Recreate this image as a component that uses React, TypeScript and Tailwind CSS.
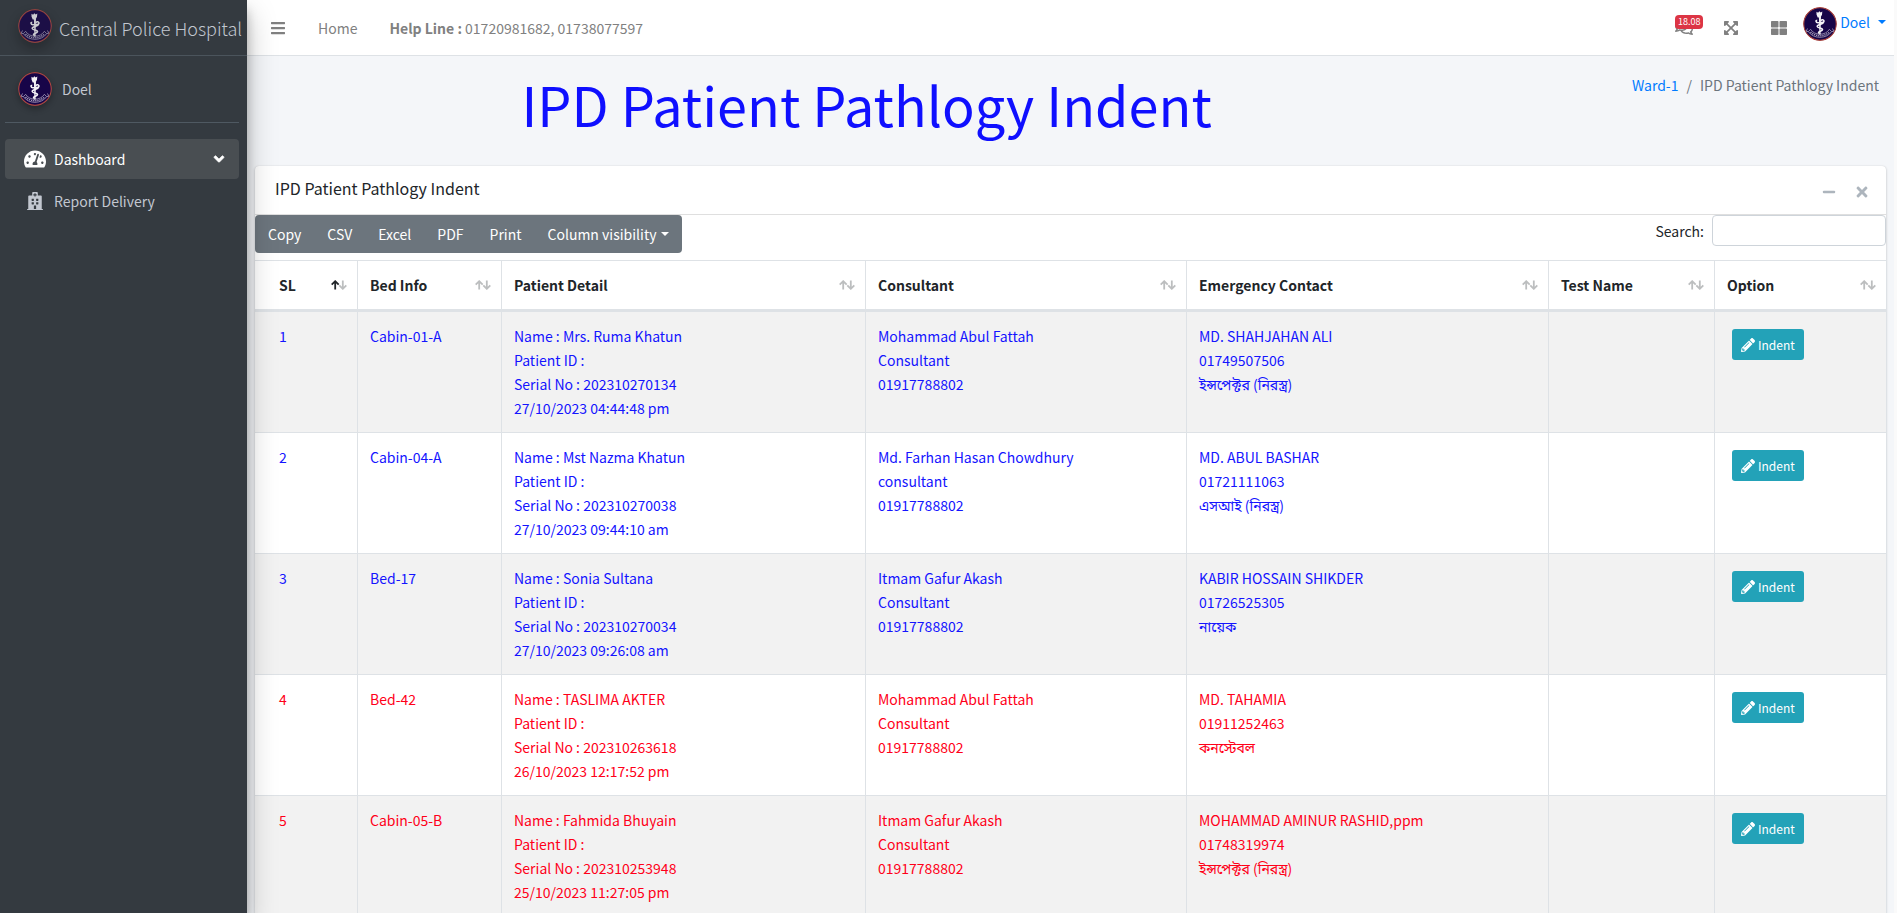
import { useState } from 'react';
import {
  FaAngleDown,
  FaBars,
  FaExpandArrowsAlt,
  FaHospital,
  FaMinus,
  FaPencilAlt,
  FaRegComments,
  FaTachometerAlt,
  FaThLarge,
  FaTimes,
} from 'react-icons/fa';

const columns = [
  { label: 'SL', width: 'w-[102px]' },
  { label: 'Bed Info', width: 'w-[144px]' },
  { label: 'Patient Detail', width: 'w-[364px]' },
  { label: 'Consultant', width: 'w-[321px]' },
  { label: 'Emergency Contact', width: 'w-[362px]' },
  { label: 'Test Name', width: 'w-[166px]' },
  { label: 'Option', width: 'w-[172px]' },
];

const patients = [
  {
    bed: 'Cabin-01-A',
    name: 'Mrs. Ruma Khatun',
    serial: '202310270134',
    date: '27/10/2023 04:44:48 pm',
    consultant: ['Mohammad Abul Fattah', 'Consultant', '01917788802'],
    contact: ['MD. SHAHJAHAN ALI', '01749507506', 'ইন্সপেক্টর (নিরস্ত্র)'],
    old: false,
  },
  {
    bed: 'Cabin-04-A',
    name: 'Mst Nazma Khatun',
    serial: '202310270038',
    date: '27/10/2023 09:44:10 am',
    consultant: ['Md. Farhan Hasan Chowdhury', 'consultant', '01917788802'],
    contact: ['MD. ABUL BASHAR', '01721111063', 'এসআই (নিরস্ত্র)'],
    old: false,
  },
  {
    bed: 'Bed-17',
    name: 'Sonia Sultana',
    serial: '202310270034',
    date: '27/10/2023 09:26:08 am',
    consultant: ['Itmam Gafur Akash', 'Consultant', '01917788802'],
    contact: ['KABIR HOSSAIN SHIKDER', '01726525305', 'নায়েক'],
    old: false,
  },
  {
    bed: 'Bed-42',
    name: 'TASLIMA AKTER',
    serial: '202310263618',
    date: '26/10/2023 12:17:52 pm',
    consultant: ['Mohammad Abul Fattah', 'Consultant', '01917788802'],
    contact: ['MD. TAHAMIA', '01911252463', 'কনস্টেবল'],
    old: true,
  },
  {
    bed: 'Cabin-05-B',
    name: 'Fahmida Bhuyain',
    serial: '202310253948',
    date: '25/10/2023 11:27:05 pm',
    consultant: ['Itmam Gafur Akash', 'Consultant', '01917788802'],
    contact: ['MOHAMMAD AMINUR RASHID,ppm', '01748319974', 'ইন্সপেক্টর (নিরস্ত্র)'],
    old: true,
  },
];

const exportButtons = ['Copy', 'CSV', 'Excel', 'PDF', 'Print'];

function Emblem({ className = '' }: { className?: string }) {
  return (
    <svg viewBox="0 0 34 34" className={`size-[34px] shrink-0 rounded-full ${className}`} aria-hidden="true">
      <circle cx="17" cy="17" r="16.3" fill="#170548" stroke="#a8443f" strokeWidth="1.2" />
      <path d="M13.5 4.8l1.6 1 1.2-1.6 1.4 1.3 1.6-.9-.3 3.2-1.5 2.6h-2.8l-1.2-2.8z" fill="#f4f2f6" />
      <path d="M15.900 9.500h2.100l-.5 18h-1.100z" fill="#f4f2f6" />
      <path
        d="M14.200 13.600c-1.900-.8-1.400 2.200.7 2.200 3.200 0 6.600-.2 6-2.100-.5-1.600-3.200-1-3 .6M20.500 14.800c.3 3-6.600 2.300-6.300 4.700.2 2 5.500 1.200 5.300 3.200-.2 1.800-4.300 1.200-4 3.100l1.800 1.200"
        fill="none"
        stroke="#f4f2f6"
        strokeWidth="1.600"
      />
      <path
        d="M4.500 21.500l-1.300 2.800 2.200.3c2.200 3.600 6.800 5.700 11.600 5.700s9.400-2.100 11.600-5.700l2.200-.3-1.300-2.800M5.400 24.600l2.200-2.300c2 3.200 5.400 4.900 9.400 4.900s7.400-1.700 9.400-4.900l2.200 2.300"
        fill="none"
        stroke="#a9a2bd"
        strokeWidth=".8"
      />
      <path d="M7.500 25.200c5.500 4.600 13.500 4.600 19 0" fill="none" stroke="#a9a2bd" strokeWidth="1.500" strokeDasharray="1.200 .9" />
    </svg>
  );
}

function SortArrows({ active }: { active: boolean }) {
  return (
    <svg viewBox="0 0 16 10" className="h-[10px] w-4 shrink-0" fill="none" strokeWidth="1.800" aria-hidden="true">
      <path d="M4.200 9.500V1.200M.7 4.700l3.500-3.500 3.500 3.500" stroke={active ? '#212529' : '#bcbebf'} />
      <path d="M11.800.5v8.300M8.300 5.300l3.500 3.500 3.500-3.500" stroke="#bcbebf" />
    </svg>
  );
}

function Caret() {
  return <span className="inline-block border-x-4 border-t-4 border-x-transparent border-t-current" />;
}

function Sidebar() {
  return (
    <aside className="z-20 w-[247px] shrink-0 bg-[#343a40] text-[#c2c7d0] shadow-[0_14px_28px_rgba(0,0,0,0.25),0_10px_10px_rgba(0,0,0,0.22)]">
      <a href="#" className="flex h-14 items-center gap-[7px] border-b border-[#4b545c] pl-[18px] text-[18px] font-light whitespace-nowrap">
        <Emblem className="-mt-1 opacity-80 shadow-[0_6px_12px_rgba(0,0,0,0.3)]" />
        Central Police Hospital
      </a>
      <div className="px-[5px] pr-2">
        <a href="#" className="flex h-[67px] items-center gap-[10px] border-b border-[#4f5962] pl-[13px]">
          <Emblem className="shadow-[0_3px_6px_rgba(0,0,0,0.3)]" />
          Doel
        </a>
        <nav className="mt-4 space-y-0.5">
          <a href="#" className="flex h-10 items-center gap-2 rounded bg-[#494e52] pr-3 pl-[19px] text-white">
            <FaTachometerAlt className="w-[22px] text-[20px]" />
            <span className="flex-1">Dashboard</span>
            <FaAngleDown className="size-4 stroke-current stroke-[20px]" />
          </a>
          <a href="#" className="flex h-10 items-center gap-2 rounded pl-[19px]">
            <FaHospital className="w-[22px] text-[18px]" />
            Report Delivery
          </a>
        </nav>
      </div>
    </aside>
  );
}

function TopBar() {
  return (
    <header className="flex h-14 items-center border-b border-[#dee2e6] bg-white pr-2 pl-[23px] text-[#808080]">
      <button type="button" aria-label="Toggle menu">
        <FaBars className="size-4" />
      </button>
      <a href="#" className="ml-8">Home</a>
      <a href="#" className="ml-8">
        <b>Help Line :</b> 01720981682, 01738077597
      </a>
      <div className="ml-auto flex items-center">
        <button type="button" aria-label="Messages" className="relative mr-5 w-7">
          <FaRegComments className="size-[18px]" />
          <span className="absolute -top-1 left-0 h-[14px] w-7 rounded-sm bg-[#dc3545] text-center text-[9px] leading-[13px] text-white">
            18.08
          </span>
        </button>
        <button type="button" aria-label="Full screen" className="mr-8">
          <FaExpandArrowsAlt className="size-4" />
        </button>
        <button type="button" aria-label="Apps" className="mr-4">
          <FaThLarge className="size-4" />
        </button>
        <button type="button" className="mb-2 flex items-center gap-[3px] text-[#007bff]">
          <Emblem />
          <span className="mb-1 flex items-center gap-2">
            Doel
            <Caret />
          </span>
        </button>
      </div>
    </header>
  );
}

export default function App() {
  const [search, setSearch] = useState('');

  const rows = patients
    .map((patient, index) => ({ ...patient, sl: index + 1 }))
    .filter((patient) => `${patient.bed} ${patient.name} ${patient.serial}`.toLowerCase().includes(search.toLowerCase()));

  return (
    <div className="flex h-screen overflow-hidden bg-[#f4f6f9] font-['Noto_Sans_CJK_SC','Noto_Sans_Bengali',sans-serif] text-[14px] leading-6 text-[#212529]">
      <Sidebar />

      <div className="min-w-0 flex-1">
        <TopBar />

        <main className="px-2">
          <div className="flex pt-3 pb-[26px]">
            <h1 className="w-3/4 text-center text-[54px] leading-[72px] text-[#0f0fff]">IPD Patient Pathlogy Indent</h1>
            <ol className="mt-[5px] flex w-1/4 justify-end gap-2 pr-[7px] text-[#6c757d]">
              <li>
                <a href="#" className="text-[#007bff]">Ward-1</a>
              </li>
              <li>/</li>
              <li>IPD Patient Pathlogy Indent</li>
            </ol>
          </div>

          <section className="rounded bg-white shadow-[0_0_1px_rgba(0,0,0,0.13),0_1px_3px_rgba(0,0,0,0.2)]">
            <div className="flex h-[49px] items-center border-b border-[#dfdfdf] pr-4 pl-5">
              <h3 className="mb-1 text-[16px]">IPD Patient Pathlogy Indent</h3>
              <div className="mt-1 ml-auto flex items-center gap-[18px] text-[#adb5bd]">
                <button type="button" aria-label="Collapse">
                  <FaMinus className="size-[14px]" />
                </button>
                <button type="button" aria-label="Remove">
                  <FaTimes className="size-4" />
                </button>
              </div>
            </div>

            <div className="flex items-start justify-between pb-[7px]">
              <div className="flex overflow-hidden rounded bg-[#6c757d] text-white">
                {exportButtons.map((label) => (
                  <button key={label} type="button" className="h-[38px] px-[13px]">
                    {label}
                  </button>
                ))}
                <button type="button" className="flex h-[38px] items-center gap-1 px-[13px]">
                  Column visibility
                  <Caret />
                </button>
              </div>
              <label className="flex items-center gap-2">
                Search:
                <input
                  type="search"
                  value={search}
                  onChange={(e) => setSearch(e.target.value)}
                  className="h-[31px] w-[174px] rounded border border-[#ced4da] bg-white px-2 outline-none"
                />
              </label>
            </div>

            <table className="w-full table-fixed border-separate border-spacing-0 border-r border-[#dee2e6]">
              <thead>
                <tr>
                  {columns.map(({ label, width }, index) => (
                    <th
                      key={label}
                      className={`border-t border-b-2 border-[#dee2e6] py-3 pr-[10px] text-left font-bold ${width} ${index === 0 ? 'pl-6' : 'border-l pl-3'}`}
                    >
                      <div className="flex items-center justify-between">
                        {label}
                        <SortArrows active={index === 0} />
                      </div>
                    </th>
                  ))}
                </tr>
              </thead>
              <tbody>
                {rows.map((row) => (
                  <tr
                    key={row.serial}
                    className={`align-top odd:bg-[#f2f2f2] [&>td]:border-t [&>td]:border-l [&>td]:border-[#dee2e6] [&>td]:p-3 [&>td:first-child]:border-l-0 [&>td:first-child]:pl-6 ${row.old ? 'text-[#ff0019]' : 'text-[#1414ff]'}`}
                  >
                    <td>{row.sl}</td>
                    <td>{row.bed}</td>
                    <td>
                      <p>Name : {row.name}</p>
                      <p>Patient ID :</p>
                      <p>Serial No : {row.serial}</p>
                      <p>{row.date}</p>
                    </td>
                    <td>
                      {row.consultant.map((line) => (
                        <p key={line}>{line}</p>
                      ))}
                    </td>
                    <td>
                      {row.contact.map((line) => (
                        <p key={line} className="h-6">{line}</p>
                      ))}
                    </td>
                    <td></td>
                    <td>
                      <button type="button" className="m-[5px] flex h-[31px] items-center gap-[3px] rounded-[3px] bg-[#23a2b8] px-[9px] text-[12px] text-white">
                        <FaPencilAlt className="size-[14px]" />
                        Indent
                      </button>
                    </td>
                  </tr>
                ))}
              </tbody>
            </table>
          </section>
        </main>
      </div>

      <div className="w-[3px] shrink-0 bg-[#fafafa]" />
    </div>
  );
}
